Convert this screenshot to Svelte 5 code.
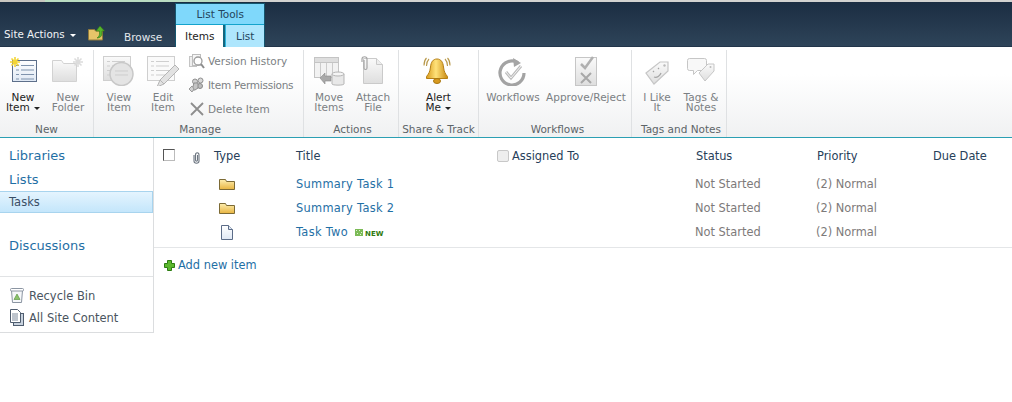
<script>
	const columns = ['Type', 'Title', 'Assigned To', 'Status', 'Priority', 'Due Date'];
	const rows = [
		{ kind: 'folder', title: 'Summary Task 1' },
		{ kind: 'folder', title: 'Summary Task 2' },
		{ kind: 'doc', title: 'Task Two', isNew: true }
	];
</script>

{#snippet sparkle(color)}
	<g stroke={color} stroke-width="1.6">
		<path d="M7 2v10M2 7h10M3.5 3.5l7 7M10.5 3.5l-7 7" />
	</g>
{/snippet}

{#snippet docLines(x, y, n, color)}
	{#each Array(n) as _, i}
		<path d="M{x} {y + i * 4.5 + 0.5}h3M{x + 5} {y + i * 4.5 + 0.5}h13" stroke={color} />
	{/each}
{/snippet}

<div class="page">
	<div class="strip"></div>
	<header class="topbar">
		<span class="site-actions">Site Actions <i class="caret white"></i></span>
		<svg class="nav-up" width="17" height="15" viewBox="0 0 17 15">
			<path d="M.5 3.500h6l1 1.500h7v9H.5z" fill="#e6c469" stroke="#8f7a3c" />
			<path d="M12 0l4.500 5H14v3c0 2-2 4-5 4 2-1 2.500-3 2.500-4V5H8z" fill="#57b32c" stroke="#2f7a14" stroke-width=".6" />
		</svg>
		<span class="browse">Browse</span>
		<div class="context">
			<div class="context-title">List Tools</div>
			<div class="context-tabs">
				<span class="tab active">Items</span>
				<span class="tab list-tab">List</span>
			</div>
		</div>
	</header>

	<section class="ribbon">
		<div class="group g-new">
			<div class="buttons">
				<div class="big w46 on">
					<svg width="32" height="32" viewBox="0 0 32 32">
						<defs>
							<linearGradient id="paper" x1="0" y1="0" x2="0" y2="1">
								<stop offset="0" stop-color="#fff" />
								<stop offset="1" stop-color="#dfe8f4" />
							</linearGradient>
							<linearGradient id="grey" x1="0" y1="0" x2="0" y2="1">
								<stop offset="0" stop-color="#fafafa" />
								<stop offset="1" stop-color="#dedede" />
							</linearGradient>
							<linearGradient id="gold" x1="0" y1="0" x2="0" y2="1">
								<stop offset="0" stop-color="#fdeeb0" />
								<stop offset="1" stop-color="#e8b440" />
							</linearGradient>
							<linearGradient id="bell" x1="0" y1="0" x2="1" y2="0">
								<stop offset="0" stop-color="#d99b1c" />
								<stop offset=".45" stop-color="#ffe27a" />
								<stop offset="1" stop-color="#c98a12" />
							</linearGradient>
						</defs>
						<rect x="5.500" y="6.500" width="24" height="21" fill="url(#paper)" stroke="#5d6f8a" />
						{@render docLines(9, 11, 4, '#7f93ad')}
						<g transform="translate(1 1)">{@render sparkle('#f3d534')}</g>
					</svg>
					<span>New<br />Item <i class="caret"></i></span>
				</div>
				<div class="big w44 off">
					<svg width="32" height="32" viewBox="0 0 32 32">
						<path d="M.5 6.500h9l2 3h13v18H.5z" fill="url(#grey)" stroke="#d2d2d2" />
						<g transform="translate(19 1)">{@render sparkle('#dcdcdc')}</g>
					</svg>
					<span>New<br />Folder</span>
				</div>
			</div>
			<div class="group-label">New</div>
		</div>

		<div class="group g-manage">
			<div class="buttons">
				<div class="big w44 off">
					<svg width="32" height="32" viewBox="0 0 32 32">
						<rect x=".5" y="2.500" width="27" height="24" fill="url(#grey)" stroke="#cfcfcf" />
						{@render docLines(4, 7, 4, '#cfcfcf')}
						<circle cx="18.500" cy="20" r="11.500" fill="#e4e4e4" stroke="#c8c8c8" stroke-width="1.500" />
						<path d="M12 17h13M12 21h13" stroke="#cdcdcd" />
					</svg>
					<span>View<br />Item</span>
				</div>
				<div class="big w44 off">
					<svg width="32" height="32" viewBox="0 0 32 32">
						<rect x=".5" y="2.500" width="27" height="24" fill="#fafafa" stroke="#cfcfcf" />
						{@render docLines(4, 7, 4, '#cfcfcf')}
						<path d="M10 33l3-7 15-15 4 4-15 15z" fill="#e2e2e2" stroke="#b5b5b5" />
						<path d="M13 26l4 4" stroke="#b5b5b5" />
					</svg>
					<span>Edit<br />Item</span>
				</div>
				<div class="small-col">
					<div class="small off">
						<svg width="16" height="16" viewBox="0 0 16 16">
							<rect x=".5" y="3.500" width="7" height="10" fill="#eee" stroke="#c4c4c4" />
							<rect x="3.500" y="1.500" width="8" height="11" fill="#f6f6f6" stroke="#bdbdbd" />
							<circle cx="9" cy="8" r="4" fill="#fff" stroke="#9c9c9c" stroke-width="1.300" />
							<path d="M12 11l3 4" stroke="#8c8c8c" stroke-width="2" />
						</svg>
						<span>Version History</span>
					</div>
					<div class="small off">
						<svg width="16" height="16" viewBox="0 0 16 16">
							<circle cx="6" cy="4.500" r="2.500" fill="#cfcfcf" stroke="#8f8f8f" />
							<circle cx="11.500" cy="3.500" r="2.500" fill="#d8d8d8" stroke="#8f8f8f" />
							<circle cx="11" cy="9" r="2.500" fill="#bdbdbd" stroke="#8a8a8a" />
							<path d="M5 6h4v5l-3 2H3z" fill="#c4c4c4" stroke="#8f8f8f" />
							<path d="M0 12l3-3 2 3-2 3z" fill="#d2d2d2" stroke="#9a9a9a" />
						</svg>
						<span class="tight">Item Permissions</span>
					</div>
					<div class="small off">
						<svg width="16" height="16" viewBox="0 0 16 16">
							<path d="M2 2l12 12M14 2L2 14" stroke="#8d8d8d" stroke-width="1.800" />
						</svg>
						<span>Delete Item</span>
					</div>
				</div>
			</div>
			<div class="group-label">Manage</div>
		</div>

		<div class="group g-actions">
			<div class="buttons">
				<div class="big w44 off">
					<svg width="32" height="32" viewBox="0 0 32 32">
						<rect x="1.500" y="3.500" width="24" height="20" fill="#f2f2f2" stroke="#c4c4c4" />
						<path d="M1.500 8.500h24M7.500 8.500v15M13.500 8.500v15M19.500 8.500v15" stroke="#cbcbcb" fill="none" />
						<rect x="1.500" y="3.500" width="24" height="5" fill="#dedede" stroke="#c4c4c4" />
						<path d="M7 24l5-5v3h6v5h-6v3z" fill="#a9a9a9" stroke="#8a8a8a" stroke-width=".6" />
						<path d="M19 20v10c0 1.500 12 1.500 12 0V20z" fill="#e8e8e8" stroke="#b5b5b5" />
						<ellipse cx="25" cy="20" rx="6" ry="2" fill="#f5f5f5" stroke="#b5b5b5" />
					</svg>
					<span>Move<br />Items</span>
				</div>
				<div class="big w44 off">
					<svg width="32" height="32" viewBox="0 0 32 32">
						<path d="M6.500 4.500h13l6 6v19h-19z" fill="url(#grey)" stroke="#cacaca" />
						<path d="M19.500 4.500v6h6" fill="#eee" stroke="#cacaca" />
						<path d="M5 8V5c0-3 5-3 5 0v9c0 2-3 2-3 0V6" fill="none" stroke="#a6a6a6" stroke-width="1.200" />
					</svg>
					<span>Attach<br />File</span>
				</div>
			</div>
			<div class="group-label">Actions</div>
		</div>

		<div class="group g-share">
			<div class="buttons">
				<div class="big wfull on">
					<svg width="32" height="32" viewBox="0 0 32 32">
						<path d="M14 5c-4 0-6 3-6.500 8-.5 5-2 7-4 9.500v2h21v-2c-2-2.500-3.500-4.500-4-9.500-.5-5-2.500-8-6.500-8z" fill="url(#bell)" stroke="#b57f14" />
						<ellipse cx="14" cy="27" rx="3.500" ry="2.500" fill="#d89a20" stroke="#a8760f" />
						<path d="M6 5C4 7 3.500 9.500 3.500 12M22 5c2 2 2.500 4.500 2.500 7M3.500 4C1.500 6 1 9 1 11.500M24.500 4c2 2 2.500 5 2.500 7.500" fill="none" stroke="#b8984a" stroke-width="1.100" />
					</svg>
					<span>Alert<br />Me <i class="caret"></i></span>
				</div>
			</div>
			<div class="group-label">Share &amp; Track</div>
		</div>

		<div class="group g-workflows">
			<div class="buttons">
				<div class="big w58 off">
					<svg width="32" height="32" viewBox="0 0 32 32">
						<path d="M21 8.600A12 12 0 1 0 27 19" fill="none" stroke="#a3a3a3" stroke-width="3.200" />
						<path d="M16 4l8 5-7 4z" fill="#a5a5a5" />
						<path d="M9 18l5 6 10-12" fill="none" stroke="#bcbcbc" stroke-width="3" />
						<path d="M9 18l5 6 10-12" fill="none" stroke="#f2f2f2" stroke-width="1" />
					</svg>
					<span>Workflows</span>
				</div>
				<div class="big w88 off">
					<svg width="32" height="32" viewBox="0 0 32 32">
						<rect x="5.500" y="3.500" width="21" height="28" fill="url(#grey)" stroke="#c6c6c6" />
						<path d="M11 10l4 4 8-11" fill="none" stroke="#b0b0b0" stroke-width="2.500" />
						<path d="M11 19l10 10M21 19L11 29" stroke="#a8a8a8" stroke-width="2" />
					</svg>
					<span>Approve/Reject</span>
				</div>
			</div>
			<div class="group-label">Workflows</div>
		</div>

		<div class="group g-tags">
			<div class="buttons">
				<div class="big w42 off">
					<svg width="32" height="32" viewBox="0 0 32 32">
						<path d="M5 19L19 8h8v9L13 30z" fill="url(#grey)" stroke="#c6c6c6" stroke-width="1.200" />
						<circle cx="23.500" cy="11.500" r="1.200" fill="#bbb" />
						<path d="M12 17l1 1M17 14l1 1M13 23c3 1 6-1 7-4" fill="none" stroke="#a5a5a5" stroke-width="1.200" />
					</svg>
					<span>I Like<br />It</span>
				</div>
				<div class="big w46 off">
					<svg width="32" height="32" viewBox="0 0 32 32">
						<path d="M4.500 4.500h15a2 2 0 0 1 2 2v8a2 2 0 0 1-2 2h-7l-4 4v-4h-4a2 2 0 0 1-2-2v-8a2 2 0 0 1 2-2z" fill="#f8f8f8" stroke="#c6c6c6" />
						<path d="M14 19l9-9h6v7l-9 10z" fill="url(#grey)" stroke="#c6c6c6" />
						<circle cx="25.500" cy="13" r="1" fill="#bbb" />
					</svg>
					<span>Tags &amp;<br />Notes</span>
				</div>
			</div>
			<div class="group-label">Tags and Notes</div>
		</div>
	</section>

	<div class="content">
		<nav class="sidebar">
			<a class="head first" href="#libraries">Libraries</a>
			<a class="head" href="#lists">Lists</a>
			<a class="current" href="#tasks">Tasks</a>
			<a class="head discussions" href="#discussions">Discussions</a>
			<div class="site-links">
				<a href="#bin">
					<svg width="16" height="17" viewBox="0 0 16 17">
						<path d="M2.500 3.500h11l-1 12h-9z" fill="#f6f8fa" stroke="#8b95a2" />
						<rect x="1.500" y="1.500" width="13" height="2.500" rx="1" fill="#fff" stroke="#8b95a2" />
						<path d="M8 7l3 5.500H5z" fill="#8cc26b" stroke="#4f8f38" stroke-width=".6" />
					</svg>
					Recycle Bin
				</a>
				<a href="#all">
					<svg width="16" height="17" viewBox="0 0 16 17">
						<rect x="4.500" y="4.500" width="10" height="12" fill="#c9d3df" stroke="#4f5d6f" />
						<path d="M1.500.5h7l3 3v10h-10z" fill="#fff" stroke="#4f5d6f" />
						<path d="M3 5h6M3 7h6M3 9h6M3 11h6" stroke="#7c8a9c" />
					</svg>
					All Site Content
				</a>
			</div>
		</nav>

		<main class="listview">
			<div class="row header">
				<span class="c-check"><i class="check"></i></span>
				<span class="c-clip">
					<svg width="9" height="12" viewBox="0 0 9 12">
						<path d="M2 3v6c0 3 5 3 5 0V3C7 0 3.500 0 3.500 3v5c0 1.500 2 1.500 2 0V3" fill="none" stroke="#6d7681" stroke-width="1.100" />
					</svg>
				</span>
				<span>{columns[0]}</span>
				<span>{columns[1]}</span>
				<span class="assigned"><i class="check disabled"></i>{columns[2]}</span>
				<span>{columns[3]}</span>
				<span>{columns[4]}</span>
				<span>{columns[5]}</span>
			</div>
			{#each rows as row}
				<div class="row item">
					<span></span>
					<span></span>
					<span class="c-type">
						{#if row.kind === 'folder'}
							<svg width="16" height="12" viewBox="0 0 16 12">
								<path d="M.5 11.500V1.500h6l1 2h8v8z" fill="url(#gold)" stroke="#7c6a35" />
							</svg>
						{:else}
							<svg class="doc" width="12" height="15" viewBox="0 0 12 15">
								<path d="M.5.500h7l4 4v10h-11z" fill="url(#paper)" stroke="#5b6c88" />
								<path d="M7.500.500v4h4" fill="#dfe8f4" stroke="#5b6c88" />
							</svg>
						{/if}
					</span>
					<span class="c-title">
						<a href="#item">{row.title}</a>
						{#if row.isNew}
							<span class="new">
								<svg width="8" height="7" viewBox="0 0 8 7">
									<rect width="8" height="7" fill="#7cbb57" />
									<path d="M1 1h1v1H1zM4 1h1v1H4zM6 3h1v1H6zM2 4h1v1H2zM5 5h1v1H5z" fill="#e3f3d6" />
								</svg>
								NEW
							</span>
						{/if}
					</span>
					<span></span>
					<span class="muted">Not Started</span>
					<span class="muted">(2) Normal</span>
					<span></span>
				</div>
			{/each}
			<div class="add">
				<svg width="11" height="11" viewBox="0 0 11 11">
					<path d="M3.500.5h4v3h3v4h-3v3h-4v-3h-3v-4h3z" fill="#5cb82e" stroke="#2c7d12" />
				</svg>
				<a href="#add">Add new item</a>
			</div>
		</main>
	</div>
</div>

<style>
	:global(body) {
		background: #fff;
	}

	.page {
		width: 1012px;
		height: 402px;
		overflow: hidden;
		font-family: 'DejaVu Sans', Verdana, sans-serif;
		font-size: 11px;
		color: #3b4f65;
	}

	.strip {
		height: 2px;
		background: linear-gradient(90deg, #c8c6c0 45px, #b9dcc2 45px, #b9dcc2 220px, #d2d2d0 220px);
	}

	.topbar {
		display: flex;
		align-items: flex-end;
		height: 44px;
		background: linear-gradient(#1b2d42, #2e4459);
		border-bottom: 1px solid #22354a;
		color: #fff;
	}

	.site-actions {
		margin: 0 12px 5px 4px;
		width: 72px;
		font-size: 10.3px;
		line-height: 14px;
		white-space: nowrap;
		color: #f2f4f6;
	}

	.nav-up {
		margin: 0 0 5px 0;
	}

	.browse {
		margin: 0 13px 2px 19px;
		font-size: 10.5px;
		line-height: 14px;
		color: #e4e8ec;
	}

	.caret {
		display: inline-block;
		width: 0;
		height: 0;
		margin-left: 1px;
		vertical-align: 1px;
		border: 3px solid transparent;
		border-top-color: #222;
		border-bottom: 0;
	}

	.caret.white {
		border-top-color: #fff;
		margin-left: 2px;
	}

	.context {
		display: flex;
		flex-direction: column;
		width: 88px;
		height: 43px;
		margin-bottom: -1px;
		border: 1px solid #14566f;
		border-bottom: 0;
		background: #7fd8fb;
		color: #24445c;
	}

	.context-title {
		height: 20px;
		font-size: 10.5px;
		line-height: 20px;
		text-align: center;
	}

	.context-tabs {
		display: flex;
		flex: 1;
		gap: 2px;
		background: #14667f;
		border-top: 1px solid #14a3cc;
	}

	.tab {
		font-size: 10.5px;
		line-height: 22px;
		text-align: center;
	}

	.tab.active {
		width: 47px;
		background: #fff;
		color: #222;
	}

	.tab.list-tab {
		flex: 1;
		background: #aee6fd;
		border-left: 1px solid #2db4da;
		color: #24445c;
	}

	.ribbon {
		display: flex;
		height: 91px;
		padding-top: 3px;
		box-sizing: border-box;
		background: linear-gradient(#fff 30%, #f0f1f2);
		border-bottom: 1px solid #2b9fb3;
	}

	.group {
		display: flex;
		flex-direction: column;
		box-sizing: border-box;
		border-right: 1px solid #dfe1e3;
	}

	.g-new {
		width: 94px;
	}
	.g-manage {
		width: 210px;
		padding-left: 3px;
	}
	.g-actions {
		width: 95px;
		padding-left: 3px;
	}
	.g-share {
		width: 80px;
	}
	.g-workflows {
		width: 153px;
		padding-left: 5px;
	}
	.g-tags {
		width: 95px;
		padding-left: 4px;
	}

	.buttons {
		display: flex;
		flex: 1;
		min-height: 0;
	}

	.big {
		display: flex;
		flex-direction: column;
		align-items: center;
		padding-top: 4px;
		line-height: 10px;
		font-size: 10.5px;
		text-align: center;
	}

	.big svg {
		margin-bottom: 6px;
	}

	.big span {
		white-space: nowrap;
	}

	.w42 {
		width: 42px;
	}
	.w44 {
		width: 44px;
	}
	.w46 {
		width: 46px;
	}
	.w58 {
		width: 58px;
	}
	.w88 {
		width: 88px;
	}
	.wfull {
		width: 100%;
	}

	.on {
		color: #222;
	}

	.off {
		color: #7b7f83;
	}

	.small-col {
		display: flex;
		flex-direction: column;
		margin: -1px 0 0 4px;
	}

	.small {
		display: flex;
		align-items: center;
		gap: 3px;
		height: 24px;
		flex: none;
		font-size: 10.5px;
		white-space: nowrap;
	}

	.tight {
		letter-spacing: -0.25px;
	}

	.group-label {
		height: 16px;
		font-size: 10.5px;
		line-height: 16px;
		text-align: center;
		color: #5d6468;
		white-space: nowrap;
	}

	.content {
		display: flex;
	}

	.sidebar {
		display: flex;
		flex-direction: column;
		box-sizing: border-box;
		width: 154px;
		height: 195px;
		padding-top: 8px;
		border-right: 1px solid #dbdddf;
		border-bottom: 1px solid #dbdddf;
	}

	.sidebar a {
		text-decoration: none;
		white-space: nowrap;
	}

	.head {
		height: 24px;
		padding-left: 9px;
		font-size: 13px;
		line-height: 20px;
		color: #1f6fa5;
	}

	.current {
		box-sizing: border-box;
		height: 22px;
		margin-top: -3px;
		padding-left: 9px;
		font-size: 11.5px;
		line-height: 20px;
		color: #3b4f65;
		background: linear-gradient(#e4f4fe, #c4e6fb);
		border: solid #a8d4ee;
		border-width: 1px 1px 1px 0;
	}

	.discussions {
		margin-top: 23px;
		height: 32px;
	}

	.site-links {
		display: flex;
		flex-direction: column;
		gap: 5px;
		margin-top: auto;
		padding: 10px 0 6px 9px;
		border-top: 1px solid #e1e3e5;
	}

	.site-links a {
		display: flex;
		align-items: center;
		gap: 4px;
		height: 17px;
		font-size: 11.5px;
		color: #4a5560;
	}

	.listview {
		flex: 1;
		padding-top: 6px;
	}

	.row {
		display: grid;
		grid-template-columns: 29px 22px 82px 201px 199px 121px 116px 1fr;
		align-items: center;
		height: 24px;
		padding-left: 9px;
		font-size: 11.4px;
		white-space: nowrap;
	}

	.header {
		margin-bottom: 4px;
		color: #27405a;
	}

	.item .muted {
		margin-left: -1px;
		color: #7d7a7a;
	}

	.c-clip svg {
		display: block;
		margin-top: 3px;
	}

	.c-type {
		display: flex;
		padding-left: 5px;
	}

	.c-type .doc {
		margin-left: 2px;
	}

	.check {
		display: block;
		box-sizing: border-box;
		width: 12px;
		height: 12px;
		margin-top: -2px;
		background: #fff;
		border: 1px solid;
		border-color: #555 #bbb #bbb #555;
	}

	.check.disabled {
		display: inline-block;
		margin: 0 3px 0 0;
		vertical-align: -2px;
		background: #eee;
		border-color: #c8c8c8;
		border-radius: 2px;
	}

	.c-title a,
	.add a {
		color: #1f6fa5;
		text-decoration: none;
	}

	.c-title a {
		letter-spacing: 0.3px;
	}

	.new {
		margin-left: 3px;
		font-size: 7px;
		font-weight: bold;
		color: #2f7a0e;
	}

	.add {
		display: flex;
		align-items: center;
		gap: 3px;
		margin-top: 3px;
		padding: 10px 0 0 10px;
		border-top: 1px solid #e4e6e8;
		line-height: 14px;
		font-size: 11.4px;
	}
</style>
